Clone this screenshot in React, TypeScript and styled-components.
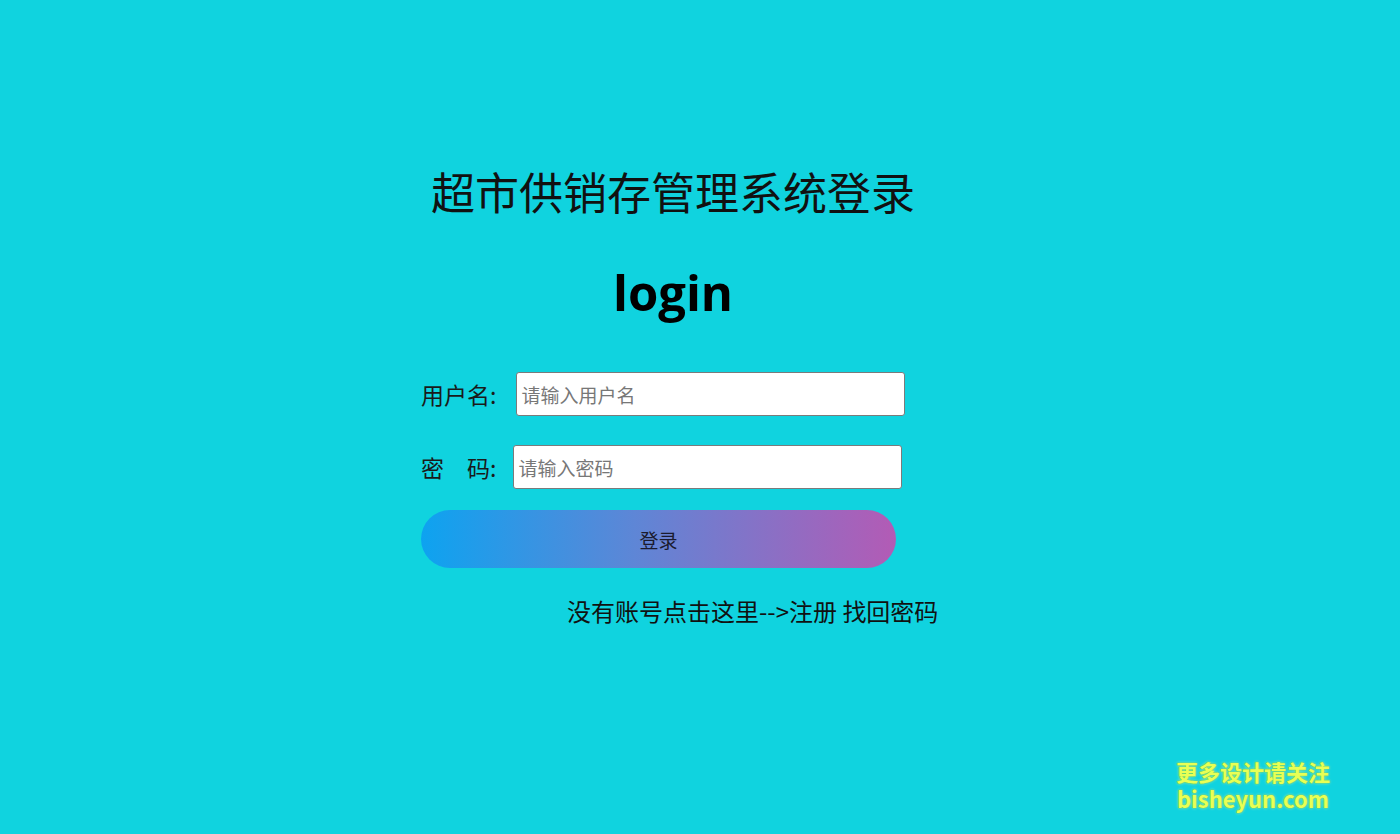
import React from 'react';
import styled, { createGlobalStyle } from 'styled-components';

const GlobalStyle = createGlobalStyle`
  html, body {
    margin: 0;
    padding: 0;
    height: 100%;
  }
  body {
    background-color: #10d3df;
    font-family: "Noto Sans CJK SC", "Noto Sans", sans-serif;
    color: #111;
  }
`;

const Page = styled.div`
  position: relative;
  width: 100%;
  height: 834px;
  background-color: #10d3df;
  overflow: hidden;
`;

const LoginBox = styled.div`
  width: 504px;
  margin-left: 421px;
  padding-top: 160px;
  display: flex;
  flex-direction: column;
`;

const Title = styled.h1`
  margin: 0;
  text-align: center;
  font-size: 44px;
  font-weight: 400;
  line-height: 62px;
  color: #111;
`;

const SubTitle = styled.h2`
  margin: 38px 0 0 0;
  text-align: center;
  font-family: "Open Sans", "Noto Sans", sans-serif;
  font-size: 49px;
  font-weight: 700;
  line-height: 64px;
  color: #000;
`;

const FieldRow = styled.div<{ $top: number }>`
  display: flex;
  align-items: center;
  height: 44px;
  margin-top: ${p => p.$top}px;
`;

const Label = styled.label<{ $gap: number }>`
  font-size: 23px;
  line-height: 30px;
  color: #1a1a1a;
  white-space: pre;
  margin-right: ${p => p.$gap}px;
`;

const Input = styled.input`
  width: 389px;
  height: 44px;
  box-sizing: border-box;
  border: 1px solid #7b7b7b;
  border-radius: 3px;
  background: #fff;
  padding: 0 4px;
  font-family: "Noto Sans CJK SC", sans-serif;
  font-size: 19px;
  color: #333;
  outline: none;

  &::placeholder {
    color: #777;
  }
`;

const LoginButton = styled.button`
  margin-top: 21px;
  width: 475px;
  height: 58px;
  border: none;
  border-radius: 29px;
  background: linear-gradient(to right, #0da3f0, #5e86d6 45%, #b35bb5);
  font-family: "Noto Sans CJK SC", sans-serif;
  font-size: 19px;
  color: #1b1b2e;
  cursor: pointer;
`;

const Links = styled.div`
  margin-top: 23px;
  padding-left: 146px;
  font-size: 24px;
  color: #111;
  white-space: nowrap;
  line-height: 40px;
`;

const Link = styled.a`
  color: inherit;
  text-decoration: none;
  cursor: pointer;
`;

const Watermark = styled.div`
  position: absolute;
  right: 70px;
  bottom: 22px;
  display: flex;
  flex-direction: column;
  align-items: center;
  font-family: "Noto Sans CJK SC", "Noto Sans", sans-serif;
  font-weight: 700;
  color: #e8ff55;
  text-shadow: 0 0 2px #34c43a, 0 0 3px #f4ffd0, 0 0 1px #3a9a20;
  line-height: 27px;
`;

const MarkLine = styled.span<{ $size: number }>`
  font-size: ${p => p.$size}px;
`;

export default function App() {
  return (
    <Page>
      <GlobalStyle />
      <LoginBox>
        <Title>超市供销存管理系统登录</Title>
        <SubTitle>login</SubTitle>
        <FieldRow $top={48}>
          <Label $gap={20}>用户名:</Label>
          <Input type="text" placeholder="请输入用户名" />
        </FieldRow>
        <FieldRow $top={29}>
          <Label $gap={17}>{'密\u3000码:'}</Label>
          <Input type="password" placeholder="请输入密码" />
        </FieldRow>
        <LoginButton>登录</LoginButton>
        <Links>
          <Link>没有账号点击这里--&gt;注册</Link> <Link>找回密码</Link>
        </Links>
      </LoginBox>
      <Watermark>
        <MarkLine $size={22}>更多设计请关注</MarkLine>
        <MarkLine $size={22}>bisheyun.com</MarkLine>
      </Watermark>
    </Page>
  );
}
